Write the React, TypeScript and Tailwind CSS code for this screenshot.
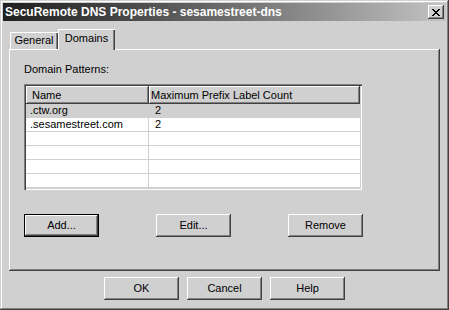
import React from 'react';

const raised =
  'shadow-[inset_-1px_-1px_0_#404040,inset_1px_1px_0_#ffffff,inset_-2px_-2px_0_#808080,inset_2px_2px_0_#d0d0d0]';
const defaultRaised =
  'shadow-[inset_0_0_0_1px_#000000,inset_-2px_-2px_0_#404040,inset_2px_2px_0_#ffffff,inset_-3px_-3px_0_#808080]';

const CloseGlyph: React.FC = () => {
  const px: [number, number, number][] = [
    [0, 0, 2], [6, 0, 2],
    [1, 1, 2], [5, 1, 2],
    [2, 2, 4],
    [3, 3, 2],
    [2, 4, 4],
    [1, 5, 2], [5, 5, 2],
    [0, 6, 2], [6, 6, 2],
  ];
  return (
    <svg width="8" height="7" viewBox="0 0 8 7" shapeRendering="crispEdges">
      {px.map(([x, y, w], i) => (
        <rect key={i} x={x} y={y} width={w} height={1} fill="#000" />
      ))}
    </svg>
  );
};

const Button: React.FC<{ label: string; isDefault?: boolean }> = ({ label, isDefault }) => (
  <button
    className={`w-[75px] h-[23px] bg-[#d0d0d0] text-[11px] leading-[13px] text-black flex items-center justify-center ${
      isDefault ? defaultRaised : raised
    }`}
  >
    {label}
  </button>
);

const rows = [
  { name: '.ctw.org', count: '2', selected: true },
  { name: '.sesamestreet.com', count: '2' },
  { name: '', count: '' },
  { name: '', count: '' },
  { name: '', count: '' },
  { name: '', count: '' },
];

export default function App() {
  return (
    <div className="w-[449px] h-[310px] bg-[#d0d0d0] p-[3px] flex flex-col font-['Liberation_Sans',Arial,sans-serif] text-black shadow-[inset_-1px_-1px_0_#404040,inset_1px_1px_0_#d0d0d0,inset_-2px_-2px_0_#808080,inset_2px_2px_0_#ffffff]">
      {/* Title bar */}
      <div className="h-[18px] flex items-center justify-between pl-[2px] pr-[2px] bg-linear-to-r from-[#202020] to-[#c4c4c4]">
        <span className="font-bold text-[12px] text-white leading-[18px] whitespace-nowrap">
          SecuRemote DNS Properties - sesamestreet-dns
        </span>
        <div className={`w-[16px] h-[14px] bg-[#d0d0d0] flex items-center justify-center ${raised}`}>
          <CloseGlyph />
        </div>
      </div>

      <div className="flex flex-col px-[6px]">
        {/* Tabs */}
        <div className="mt-[8px] h-[20px] flex items-end relative z-10">
          <div className="ml-[1px] w-[48px] h-[17px] flex items-center justify-center text-[11px] shadow-[inset_1px_1px_0_#ffffff,inset_-1px_0_0_#404040,inset_-2px_0_0_#808080]">
            General
          </div>
          <div className="w-[57px] h-[21px] -mb-[1px] pb-[3px] bg-[#d0d0d0] flex items-center justify-center text-[11px] shadow-[inset_1px_1px_0_#ffffff,inset_-1px_0_0_#404040,inset_-2px_0_0_#808080]">
            Domains
          </div>
        </div>

        {/* Panel */}
        <div className="h-[222px] pl-[15px] pt-[14px] flex flex-col shadow-[inset_-1px_-1px_0_#404040,inset_1px_1px_0_#ffffff,inset_-2px_-2px_0_#808080]">
          <div className="h-[13px] leading-[13px] text-[11px]">Domain Patterns:</div>

          <div className="mt-[8px] w-[338px] h-[106px] p-[2px] shadow-[inset_1px_1px_0_#808080,inset_2px_2px_0_#404040,inset_-1px_-1px_0_#ffffff,inset_-2px_-2px_0_#d0d0d0]">
            <div className="bg-white h-full flex flex-col">
              <div className="h-[18px] flex text-[11px]">
                <div className={`w-[123px] h-full pl-[6px] flex items-center bg-[#d0d0d0] ${raised}`}>Name</div>
                <div className={`flex-1 h-full pl-[2px] flex items-center bg-[#d0d0d0] whitespace-nowrap ${raised}`}>
                  Maximum Prefix Label Count
                </div>
              </div>
              {rows.map((r, i) => (
                <div
                  key={i}
                  className={`h-[14px] flex border-b border-[#d0d0d0] text-[11px] leading-[13px] ${
                    r.selected ? 'bg-[#d0d0d0]' : ''
                  }`}
                >
                  <div className="w-[123px] pl-[4px] border-r border-[#d0d0d0] whitespace-nowrap">{r.name}</div>
                  <div className="flex-1 pl-[6px]">{r.count}</div>
                </div>
              ))}
            </div>
          </div>

          <div className="mt-[24px] flex gap-[57px]">
            <Button label="Add..." isDefault />
            <Button label="Edit..." />
            <Button label="Remove" />
          </div>
        </div>

        {/* Dialog buttons */}
        <div className="mt-[6px] flex justify-center gap-[8px]">
          <Button label="OK" />
          <Button label="Cancel" />
          <Button label="Help" />
        </div>
      </div>
    </div>
  );
}
